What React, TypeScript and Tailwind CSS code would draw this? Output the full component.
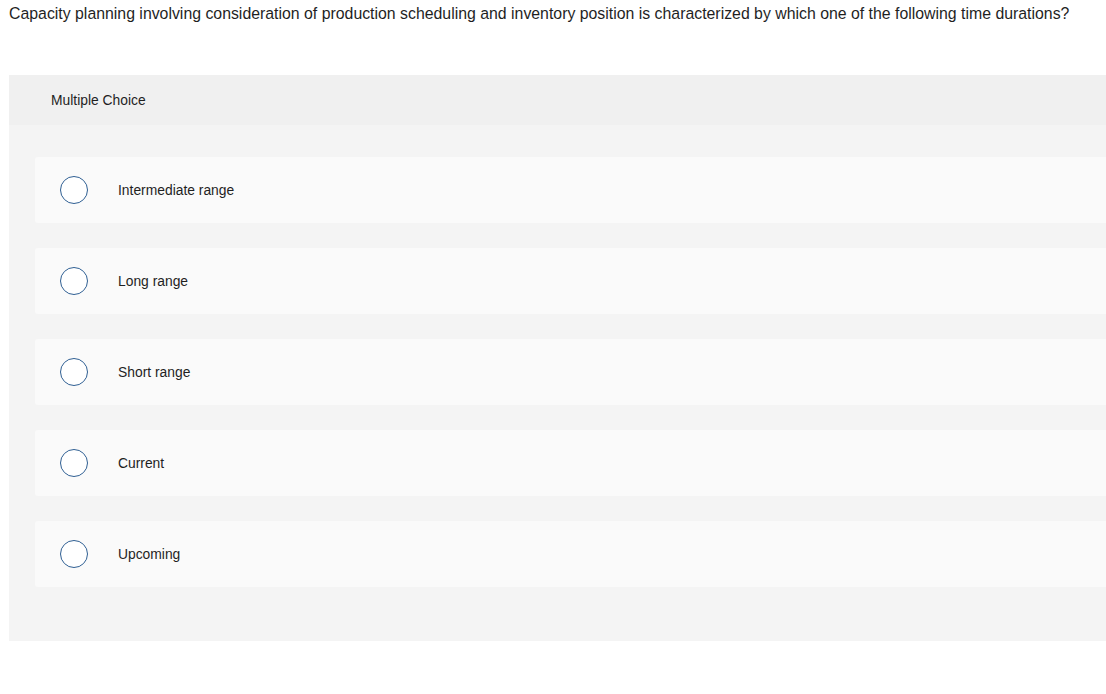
import React from 'react';

const options = ['Intermediate range', 'Long range', 'Short range', 'Current', 'Upcoming'];

const App: React.FC = () => {
  return (
    <div className="min-h-[694px] bg-white text-[#1f1f1f]" style={{ fontFamily: '"Liberation Sans", Arial, sans-serif' }}>
      <p className="pl-[9px] pt-[5px] text-[15.85px] leading-[18px]">
        Capacity planning involving consideration of production scheduling and inventory position is characterized by which one of the following time durations?
      </p>

      <div className="ml-[9px] mt-[52px] rounded-tl-[2px] bg-[#f4f4f4]">
        {/* Header */}
        <div className="flex h-[50px] items-center bg-[#f0f0f0] pl-[42px] pt-[1px] text-[13.85px]">
          Multiple Choice
        </div>

        {/* Options */}
        <div className="flex flex-col gap-[25px] pb-[54px] pl-[26px] pt-[32px]">
          {options.map(option => (
            <div key={option} className="flex h-[66px] items-center rounded-l-[3px] bg-[#fafafa]">
              <span className="ml-[25px] h-[28px] w-[28px] rounded-full border border-[#2f5f93] bg-white" />
              <span className="ml-[30px] pt-[1px] text-[13.85px]">{option}</span>
            </div>
          ))}
        </div>
      </div>
    </div>
  );
};

export default App;
